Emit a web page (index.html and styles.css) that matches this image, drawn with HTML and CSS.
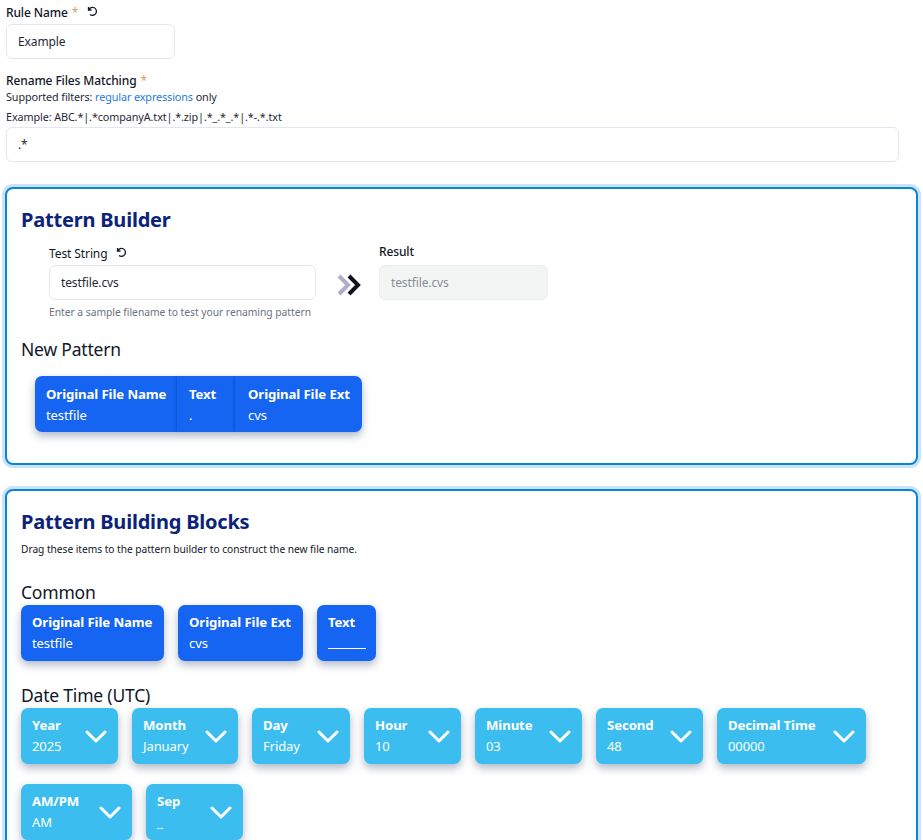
FILE: index.html
```html
<!DOCTYPE html>
<html lang="en">
<head>
<meta charset="utf-8">
<title>Rename Rule</title>
<link rel="stylesheet" href="styles.css">
</head>
<body>
<main class="page">
  <section class="fields">
    <div class="label-row rule-label"><label class="label">Rule Name</label><span class="req">*</span>
      <svg class="reset" viewBox="0 0 24 24"><path d="M5 4v6h6M5.5 9.5A8 8 0 1 1 8 19"/></svg>
    </div>
    <input class="input input-rule" value="Example">
    <div class="label-row match-label"><label class="label">Rename Files Matching</label><span class="req">*</span></div>
    <p class="hint">Supported filters: <a class="link">regular expressions</a> only</p>
    <p class="hint example">Example: ABC.*|.*companyA.txt|.*.zip|.*_.*_.*|.*-.*.txt</p>
    <input class="input input-wide" value=".*">
  </section>

  <section class="card builder">
    <h2 class="card-title">Pattern Builder</h2>
    <div class="test-row">
      <div class="test-col">
        <div class="label-row test-label"><label class="label plain">Test String</label>
          <svg class="reset" viewBox="0 0 24 24"><path d="M5 4v6h6M5.5 9.5A8 8 0 1 1 8 19"/></svg>
        </div>
        <input class="input input-test" value="testfile.cvs">
        <p class="helper">Enter a sample filename to test your renaming pattern</p>
      </div>
      <svg class="arrows" viewBox="0 0 26 24"><path class="a1" d="M3 3l9 9-9 9"/><path class="a2" d="M13 3l9 9-9 9"/></svg>
      <div class="result-col">
        <label class="label result-label">Result</label>
        <input class="input input-result" value="testfile.cvs" disabled>
      </div>
    </div>
    <h3 class="sub new-pattern">New Pattern</h3>
    <div class="chain">
      <div class="seg seg-name"><strong>Original File Name</strong><span>testfile</span></div>
      <div class="seg seg-text"><strong>Text</strong><span>.</span></div>
      <div class="seg seg-ext"><strong>Original File Ext</strong><span>cvs</span></div>
    </div>
  </section>

  <section class="card blocks">
    <h2 class="card-title">Pattern Building Blocks</h2>
    <p class="desc">Drag these items to the pattern builder to construct the new file name.</p>
    <h3 class="sub common">Common</h3>
    <div class="chips">
      <div class="chip blue w143"><strong>Original File Name</strong><span>testfile</span></div>
      <div class="chip blue w125"><strong>Original File Ext</strong><span>cvs</span></div>
      <div class="chip blue w59"><strong>Text</strong><span class="blank"></span></div>
    </div>
    <h3 class="sub datetime">Date Time (UTC)</h3>
    <div class="chips wrap">
      <div class="chip sky w97"><div class="txt"><strong>Year</strong><span>2025</span></div><svg class="chev" viewBox="0 0 22 13"><path d="M2 2l9 9 9-9"/></svg></div>
      <div class="chip sky w106"><div class="txt"><strong>Month</strong><span>January</span></div><svg class="chev" viewBox="0 0 22 13"><path d="M2 2l9 9 9-9"/></svg></div>
      <div class="chip sky w98"><div class="txt"><strong>Day</strong><span>Friday</span></div><svg class="chev" viewBox="0 0 22 13"><path d="M2 2l9 9 9-9"/></svg></div>
      <div class="chip sky w97"><div class="txt"><strong>Hour</strong><span>10</span></div><svg class="chev" viewBox="0 0 22 13"><path d="M2 2l9 9 9-9"/></svg></div>
      <div class="chip sky w107"><div class="txt"><strong>Minute</strong><span>03</span></div><svg class="chev" viewBox="0 0 22 13"><path d="M2 2l9 9 9-9"/></svg></div>
      <div class="chip sky w107"><div class="txt"><strong>Second</strong><span>48</span></div><svg class="chev" viewBox="0 0 22 13"><path d="M2 2l9 9 9-9"/></svg></div>
      <div class="chip sky w149"><div class="txt"><strong>Decimal Time</strong><span>00000</span></div><svg class="chev" viewBox="0 0 22 13"><path d="M2 2l9 9 9-9"/></svg></div>
      <div class="chip sky w111"><div class="txt"><strong>AM/PM</strong><span>AM</span></div><svg class="chev" viewBox="0 0 22 13"><path d="M2 2l9 9 9-9"/></svg></div>
      <div class="chip sky w97"><div class="txt"><strong>Sep</strong><span>_</span></div><svg class="chev" viewBox="0 0 22 13"><path d="M2 2l9 9 9-9"/></svg></div>
    </div>
  </section>
</main>
</body>
</html>
```
FILE: styles.css
```css
* { box-sizing: border-box; }
html, body { margin: 0; height: 840px; overflow: hidden; background: #fff; }
body { font-family: "Noto Sans", "Open Sans", "Liberation Sans", sans-serif; color: #111827; font-size: 12px; }
.page { display: flex; flex-direction: column; padding: 0 5px 0 5px; }
p, h2, h3 { margin: 0; }
.fields { padding-left: 1px; height: 183px; }
.label-row { display: flex; align-items: center; height: 18px; }
.rule-label { margin-top: 3px; }
.match-label { margin-top: 12px; }
.label { font-size: 12px; font-weight: 500; color: #111827; letter-spacing: -.12px; }
.req { color: #d9a066; margin-left: 4px; font-size: 12px; }
.reset { width: 12px; height: 12px; margin-left: 8px; margin-bottom: 3px; fill: none; stroke: #111827; stroke-width: 2.6; }
.input { display: block; height: 35px; border: 1px solid #e4e7f1; border-radius: 6px; padding: 0 11px; font: inherit; font-size: 12px; color: #1f2937; background: #fff; letter-spacing: -.12px; }
.input-rule { width: 169px; margin-top: 3px; }
.input-wide { width: 893px; margin-top: 2px; }
.hint { font-size: 10.8px; line-height: 16px; color: #1f2937; letter-spacing: -.1px; }
.example { margin-top: 4px; }
.link { color: #1f7ae0; }
.card { width: 913px; border: 2px solid #0a84d8; border-radius: 8px; box-shadow: 0 0 0 3px #cbe3f6; margin-left: 0; padding: 0 14px; background: #fff; }
.builder { height: 278px; margin-top: 4px; }
.blocks { height: 400px; margin-top: 24px; }
.card-title { font-size: 20px; line-height: 28px; font-weight: 700; color: #0b2378; letter-spacing: -.2px; margin-top: 17px; }
.test-row { display: flex; align-items: flex-start; padding-left: 28px; margin-top: 4px; }
.test-col { width: 267px; }
.test-label { height: 18px; margin-top: 6px; margin-bottom: 3px; }
.plain { font-weight: 400; letter-spacing: -.1px; }
.input-test { width: 267px; }
.helper { font-size: 10.3px; line-height: 14px; margin-top: 5px; color: #6b7280; white-space: nowrap; letter-spacing: -.03px; }
.arrows { width: 26px; height: 24px; margin: 35px 17px 0 20px; flex: none; fill: none; stroke-width: 4; }
.a1 { stroke: #b3abc9; }
.a2 { stroke: #0f1020; }
.result-col { width: 169px; }
.result-label { display: block; line-height: 18px; margin-top: 5px; margin-bottom: 4px; }
.input-result { width: 169px; background: #f3f4f4; color: #8a8f98; border-color: #eceeee; }
.sub { font-size: 17.5px; line-height: 24px; font-weight: 400; color: #111827; letter-spacing: -.2px; }
.new-pattern { margin-top: 18px; }
.chain { display: inline-flex; height: 56px; margin: 15px 0 0 14px; border-radius: 7px; background: #1565f2; box-shadow: 0 4px 8px rgba(30, 50, 90, .35); color: #fff; }
.seg { display: flex; flex-direction: column; padding: 8px 0 0 11px; white-space: nowrap; }
.seg + .seg { box-shadow: -2px 0 2px -1px rgba(10, 60, 170, .5); }
.seg-name { width: 142px; }
.seg-text { width: 58px; padding-left: 12px; }
.seg-ext { width: 127px; padding-left: 13px; }
strong { font-size: 13.2px; line-height: 21px; font-weight: 700; letter-spacing: -.1px; }
.seg span, .chip span { font-size: 13px; line-height: 21px; letter-spacing: -.1px; }
.desc { font-size: 10.2px; line-height: 14px; margin-top: 6px; color: #111827; letter-spacing: -.03px; }
.common { margin-top: 24px; }
.chips { display: flex; gap: 14px; margin-top: 1px; }
.wrap { flex-wrap: wrap; row-gap: 20px; width: 880px; margin-top: 1px; }
.datetime { margin-top: 22px; }
.chip { height: 56px; border-radius: 7px; color: #fff; display: flex; padding: 7px 0 0 11px; flex: none; box-shadow: 0 4px 8px rgba(30, 50, 90, .35); }
.blue { background: #1565f2; flex-direction: column; white-space: nowrap; }
.sky { background: #3bbdf0; align-items: flex-start; justify-content: space-between; padding-right: 11px; }
.txt { display: flex; flex-direction: column; white-space: nowrap; }
.blank { display: block; width: 38px; height: 13px; border-bottom: 1px solid #fff; margin-top: 3px; line-height: 0 !important; }
.chev { width: 22px; height: 13px; margin-top: 15px; fill: none; stroke: #fff; stroke-width: 3; stroke-linecap: round; stroke-linejoin: round; flex: none; }
.w143 { width: 143px; } .w125 { width: 125px; } .w59 { width: 59px; }
.w97 { width: 97px; } .w106 { width: 106px; } .w98 { width: 98px; } .w107 { width: 107px; } .w149 { width: 149px; } .w111 { width: 111px; }
```
